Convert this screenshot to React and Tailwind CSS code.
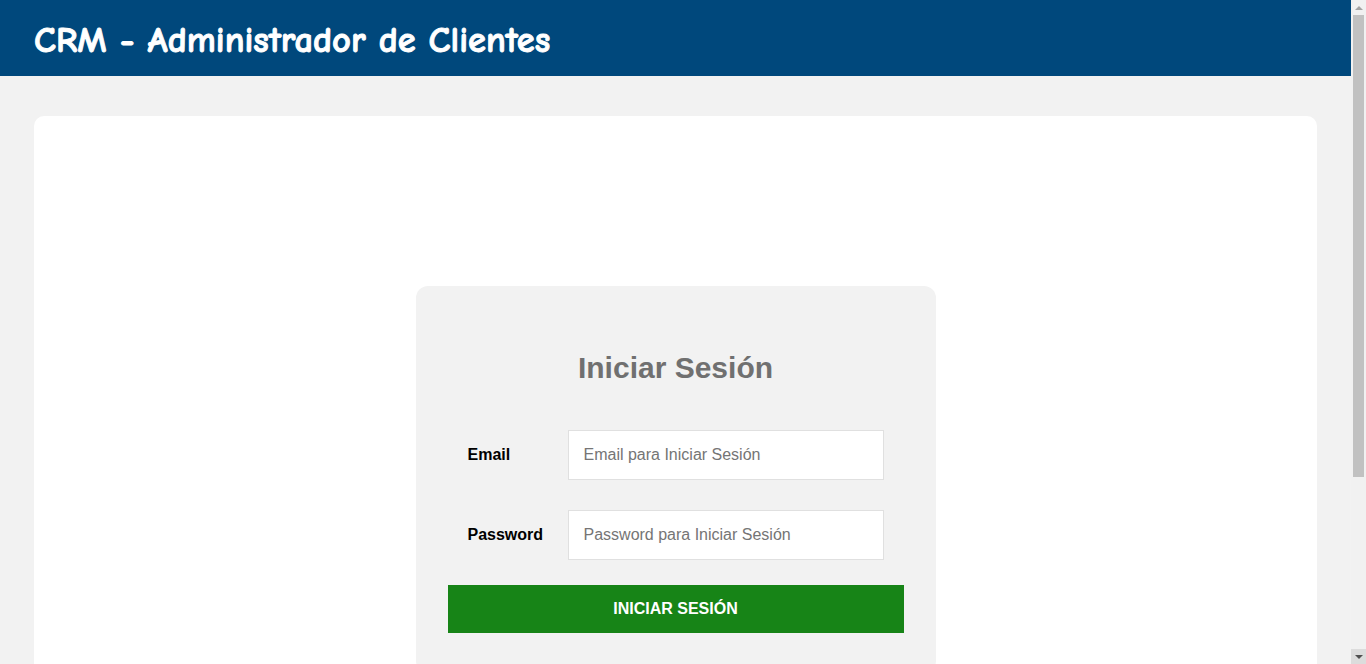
// App.jsx
import { useState } from "react";

function FakeScrollbar() {
  // barra de scroll del navegador, tal como se ve en la captura
  return (
    <div className="sticky top-0 flex h-screen w-[15px] shrink-0 flex-col bg-[#f1f1f1]">
      <div className="flex h-[15px] items-center justify-center">
        <span className="block h-0 w-0 border-x-[4px] border-b-[4px] border-x-transparent border-b-[#a3a3a3]" />
      </div>
      <div className="mx-[2px] h-[462px] bg-[#c1c1c1]" />
      <div className="flex-1" />
      <div className="flex h-[15px] items-center justify-center bg-[#dcdcdc]">
        <span className="block h-0 w-0 border-x-[4px] border-t-[4px] border-x-transparent border-t-[#505050]" />
      </div>
    </div>
  );
}

export default function App() {
  const [email, setEmail] = useState("");
  const [password, setPassword] = useState("");

  return (
    <div className="flex min-h-screen bg-[#f2f2f2] font-['Liberation_Sans',Arial,sans-serif]">
      <div className="min-w-0 flex-1 pb-16">
        {/* Cabecera */}
        <header className="flex h-[76px] items-center bg-[#00487c] px-[34px] pt-[4px]">
          <h1 className="font-['Comic_Sans_MS','Comic_Neue',cursive] text-[36.5px] font-bold leading-none text-white [-webkit-text-stroke:0.9px_white]">
            CRM - Administrador de Clientes
          </h1>
        </header>

        {/* Contenido */}
        <main className="mx-auto mt-10 w-[95%] rounded-[10px] bg-white pb-16 pt-[170px]">
          <div className="mx-auto w-[520px] rounded-[12px] bg-[#f2f2f2] px-8 pb-10 pt-[64px]">
            <h2 className="text-center text-[30px] font-bold leading-[36px] text-[#707070]">
              Iniciar Sesión
            </h2>

            <form
              onSubmit={(e) => e.preventDefault()}
              className="mt-[44px] flex flex-col"
            >
              <div className="flex items-center px-5">
                <label className="w-[100px] text-[16px] font-bold text-black">
                  Email
                </label>
                <input
                  type="email"
                  value={email}
                  onChange={(e) => setEmail(e.target.value)}
                  placeholder="Email para Iniciar Sesión"
                  className="h-[50px] flex-1 border border-[#e0e0e0] bg-white px-[15px] text-[16px] text-black placeholder:text-[#757575] focus:outline-none"
                />
              </div>

              <div className="mt-[30px] flex items-center px-5">
                <label className="w-[100px] text-[16px] font-bold text-black">
                  Password
                </label>
                <input
                  type="password"
                  value={password}
                  onChange={(e) => setPassword(e.target.value)}
                  placeholder="Password para Iniciar Sesión"
                  className="h-[50px] flex-1 border border-[#e0e0e0] bg-white px-[15px] text-[16px] text-black placeholder:text-[#757575] focus:outline-none"
                />
              </div>

              <button
                type="submit"
                className="mt-[25px] h-[48px] w-full bg-[#178417] text-[16px] font-bold uppercase text-white"
              >
                Iniciar Sesión
              </button>
            </form>
          </div>
        </main>
      </div>
      <FakeScrollbar />
    </div>
  );
}
